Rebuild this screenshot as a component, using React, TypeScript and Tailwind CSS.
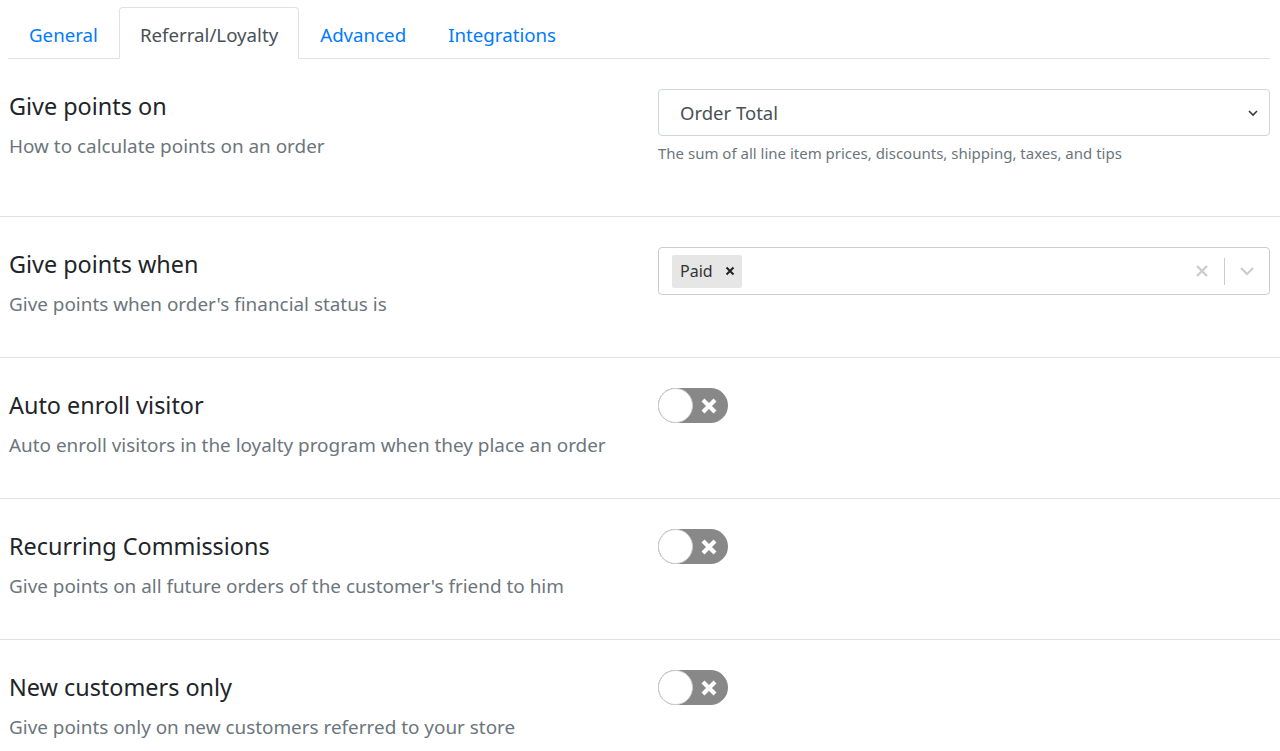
import React from "react";

const font = { fontFamily: '"Noto Sans", "Open Sans", sans-serif' };

function Toggle() {
  return (
    <div className="relative flex h-[35px] w-[70px] items-center rounded-full bg-[#888888]">
      <div className="h-[35px] w-[35px] rounded-full border border-[#d0d0d0] bg-white" />
      <svg className="absolute left-[42px] top-[9px]" width="18" height="18" viewBox="0 0 18 18">
        <path d="M3 3 L15 15 M15 3 L3 15" stroke="white" strokeWidth="4.2" strokeLinecap="butt" />
      </svg>
    </div>
  );
}

function Row({
  title,
  desc,
  children,
  last,
}: {
  title: string;
  desc: string;
  children: React.ReactNode;
  last?: boolean;
}) {
  return (
    <div className={last ? "" : "border-b border-[#dee2e6]"}>
      <div className="grid grid-cols-[640px_1fr] gap-[9px] pl-[9px] pr-[10px] pt-[31px] pb-[39px]">
        <div className="pt-[2px]">
          <div className="text-[23.4px] leading-[28px] text-[#212529]">{title}</div>
          <div className="mt-[13px] text-[18.9px] leading-[27px] text-[#6c757d]">{desc}</div>
        </div>
        <div className="-mt-[1px]">{children}</div>
      </div>
    </div>
  );
}

export default function App() {
  const tabs = ["General", "Referral/Loyalty", "Advanced", "Integrations"];
  return (
    <div className="min-h-[751px] bg-white" style={font}>
      <div className="px-[9px] pt-[7px]">
        <div className="flex border-b border-[#dee2e6] w-[1262px] -ml-[1px]">
          {tabs.map((t, i) => (
            <div
              key={t}
              className={
                "-mb-[1px] rounded-t-[4px] border px-[20px] pt-[13px] pb-[10px] text-[18.7px] leading-[27px] " +
                (i === 1
                  ? "border-[#dee2e6] border-b-white bg-white text-[#495057]"
                  : "border-transparent text-[#007bff]")
              }
            >
              {t}
            </div>
          ))}
        </div>
      </div>

      <Row title="Give points on" desc="How to calculate points on an order">
        <div className="mb-[13px]">
          <div className="flex h-[47px] items-center justify-between rounded-[4px] border border-[#ced4da] pl-[21px] pr-[10px] text-[18.5px] text-[#495057]">
            <span>Order Total</span>
            <svg width="12" height="12" viewBox="0 0 12 12">
              <path d="M2 4 L6 8 L10 4" fill="none" stroke="#343a40" strokeWidth="1.6" />
            </svg>
          </div>
          <div className="mt-[7px] text-[15px] leading-[21px] text-[#6c757d]">
            The sum of all line item prices, discounts, shipping, taxes, and tips
          </div>
        </div>
      </Row>

      <Row title="Give points when" desc="Give points when order's financial status is">
        <div className="flex h-[48px] items-center rounded-[4px] border border-[#cccccc] pl-[13px]">
          <div className="flex h-[33px] items-center rounded-[2px] bg-[#e6e6e6] pl-[8px] pr-[7px] text-[16px] text-[#333333]">
            <span>Paid</span>
            <svg className="ml-[12px]" width="10" height="10" viewBox="0 0 10 10">
              <path d="M1.5 1.5 L8.5 8.5 M8.5 1.5 L1.5 8.5" stroke="#222" strokeWidth="2" />
            </svg>
          </div>
          <div className="flex-1" />
          <svg className="mr-[15px]" width="14" height="14" viewBox="0 0 14 14">
            <path d="M2 2 L12 12 M12 2 L2 12" stroke="#cccccc" strokeWidth="2.4" />
          </svg>
          <div className="h-[27px] w-[1px] bg-[#cccccc]" />
          <svg className="mx-[14px]" width="16" height="16" viewBox="0 0 16 16">
            <path d="M2 5 L8 11 L14 5" fill="none" stroke="#cccccc" strokeWidth="2.2" />
          </svg>
        </div>
      </Row>

      <Row title="Auto enroll visitor" desc="Auto enroll visitors in the loyalty program when they place an order">
        <Toggle />
      </Row>
      <Row title="Recurring Commissions" desc="Give points on all future orders of the customer's friend to him">
        <Toggle />
      </Row>
      <Row title="New customers only" desc="Give points only on new customers referred to your store" last>
        <Toggle />
      </Row>
    </div>
  );
}
